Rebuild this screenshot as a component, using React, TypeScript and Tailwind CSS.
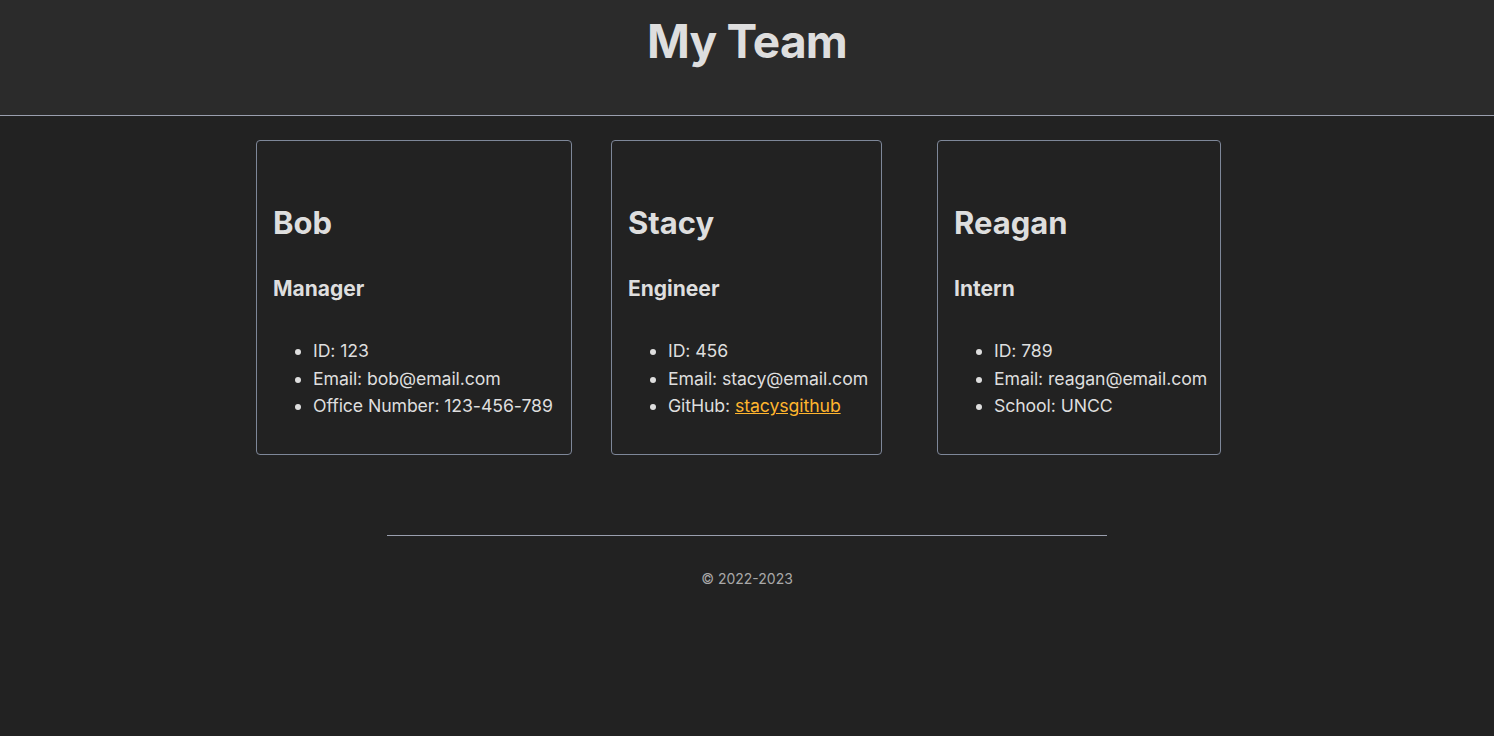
import React from 'react';

type Member = {
  name: string;
  role: string;
  id: string;
  email: string;
  extraLabel: string;
  extra: string;
  link?: boolean;
  width: string;
};

const team: Member[] = [
  { name: 'Bob', role: 'Manager', id: '123', email: 'bob@email.com', extraLabel: 'Office Number', extra: '123-456-789', width: 'w-[316px]' },
  { name: 'Stacy', role: 'Engineer', id: '456', email: 'stacy@email.com', extraLabel: 'GitHub', extra: 'stacysgithub', link: true, width: 'w-[271px]' },
  { name: 'Reagan', role: 'Intern', id: '789', email: 'reagan@email.com', extraLabel: 'School', extra: 'UNCC', width: 'w-[284px]' },
];

function Card({ m }: { m: Member }) {
  return (
    <div className={`${m.width} shrink-0 border border-[#7e8799] rounded-[4px] px-[16px] pt-[63px] pb-[34px]`}>
      <h2 className="text-[31px] leading-[1.2] font-bold text-[#dedede]">{m.name}</h2>
      <h3 className="mt-[35px] text-[21px] leading-[1.2] font-bold text-[#dedede]">{m.role}</h3>
      <ul className="mt-[36px] list-disc pl-[40px] text-[17.7px] leading-[27.5px] text-[#dedede] whitespace-nowrap tracking-[-0.1px]">
        <li>ID: {m.id}</li>
        <li>Email: {m.email}</li>
        <li>
          {m.extraLabel}:{' '}
          {m.link ? (
            <a href="#" className="text-[#ffb52e] underline">{m.extra}</a>
          ) : (
            m.extra
          )}
        </li>
      </ul>
    </div>
  );
}

export default function App() {
  return (
    <div className="min-h-screen bg-[#222222] font-['Inter','Liberation_Sans',sans-serif]">
      {/* header */}
      <header className="h-[116px] bg-[#2b2b2b] border-b border-[#9a9fae] pt-[14px] text-center">
        <h1 className="text-[46px] leading-[1.2] font-bold text-[#dedede] tracking-[-0.8px]">My Team</h1>
      </header>

      {/* cards */}
      <div className="mt-[24px] flex pl-[256px]">
        <Card m={team[0]} />
        <div className="w-[39px] shrink-0" />
        <Card m={team[1]} />
        <div className="w-[55px] shrink-0" />
        <Card m={team[2]} />
      </div>

      {/* footer */}
      <footer className="mt-[80px] flex flex-col items-center">
        <div className="w-[720px] h-px bg-[#9a9fae]" />
        <p className="mt-[32px] text-[14px] leading-[21px] text-[#a9a9a9]">© 2022-2023</p>
      </footer>
    </div>
  );
}
